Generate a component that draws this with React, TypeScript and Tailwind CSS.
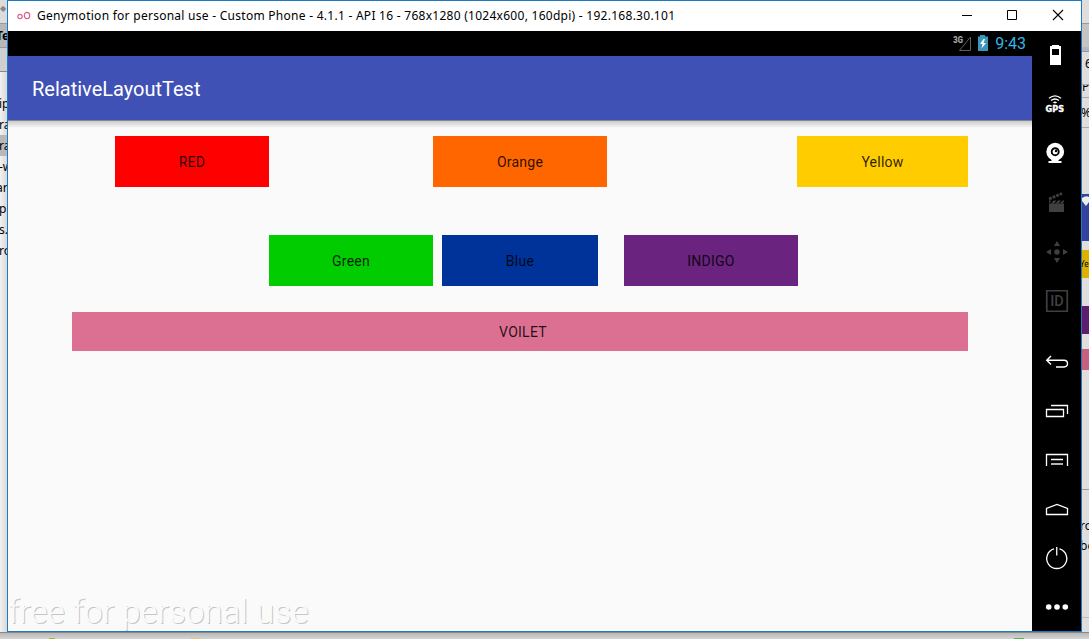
import type { ReactNode } from 'react';

function Slot({ children }: { children: ReactNode }) {
  return (
    <svg width="49" height="49" viewBox="0 0 49 49" fill="none" className="block shrink-0">
      {children}
    </svg>
  );
}

function Toolbar() {
  return (
    <aside className="flex w-[49px] shrink-0 flex-col bg-black">
      <Slot>
        <path d="M20 14h7v1h2v19H18V15h2z" fill="#fff" />
        <path d="M20 18h7v6h-7z" fill="#000" />
      </Slot>
      <Slot>
        <g stroke="#fff" strokeWidth="1.3">
          <path d="M17 18.300q6-5 12 0" />
          <path d="M19 20.600q4-3.200 8 0" />
        </g>
        <path d="M20.800 22.400q2.200-2 4.400 0L23 23.600z" fill="#fff" />
        <text x="13.600" y="31.600" textLength="18.600" lengthAdjust="spacingAndGlyphs" fill="#fff" stroke="#fff" strokeWidth="0.300" className="font-['DejaVu_Sans',sans-serif] text-[8px] font-bold">GPS</text>
      </Slot>
      <Slot>
        <circle cx="23.200" cy="22.700" r="8.900" fill="#fff" />
        <circle cx="23.200" cy="22.700" r="3.500" stroke="#000" strokeWidth="1.900" />
        <circle cx="24" cy="22" r="1.200" fill="#000" />
        <path d="M19.500 30h7v2h3v2h-13v-2h3z" fill="#fff" />
      </Slot>
      <Slot>
        <path d="M17 25.500h15V34H17z" fill="#404040" />
        <path d="M17 21l13-5.500" stroke="#404040" strokeWidth="2.800" strokeDasharray="2.900 1" />
        <path d="M17 22.500h2.500L17 25.500zM21.500 22.500h3l-2.500 3h-3zM26 22.500h3l-2.500 3h-3zM30.500 22.500H32v1l-1.500 2H28z" fill="#404040" />
      </Slot>
      <Slot>
        <g fill="#404040">
          <circle cx="25" cy="25" r="2.700" />
          <path d="M25 14l3 5h-6zM25 36l3-5h-6zM14 25l5-3v6zM36 25l-5-3v6z" />
        </g>
      </Slot>
      <Slot>
        <path d="M14.750 14.750h20.500v20.500h-20.500z" stroke="#404040" strokeWidth="1.700" />
        <text x="18.200" y="30.200" textLength="13.500" lengthAdjust="spacingAndGlyphs" fill="#404040" className="font-[Roboto,sans-serif] text-[14.5px] font-medium">ID</text>
      </Slot>
      <div className="h-3 shrink-0" />
      <Slot>
        <path d="M19 19l-4.300 4.300L19 27.600M14.700 23.300H32q3.500 0 3.500 3.300t-3.500 3.400h-8" stroke="#fff" strokeWidth="1.400" />
      </Slot>
      <Slot>
        <path d="M14.500 23.500h17v7h-17zM19 19.500h16.500V28" stroke="#fff" strokeWidth="1.300" />
      </Slot>
      <Slot>
        <path d="M14.500 31V19.500h21V31M19 24.500h12" stroke="#fff" strokeWidth="1.300" />
        <path d="M19 29h12" stroke="#b4b4b4" strokeWidth="2" />
      </Slot>
      <Slot>
        <path d="M14.500 30.500v-6L25 20.500l10.500 4v6z" stroke="#fff" strokeWidth="1.300" />
      </Slot>
      <Slot>
        <path d="M22 15.900a10 10 0 1 0 5.500 0M24.750 14v8.500" stroke="#fff" strokeWidth="1.300" />
      </Slot>
      <Slot>
        <g fill="#fff">
          <circle cx="16.700" cy="25" r="2.800" />
          <circle cx="25" cy="25" r="2.800" />
          <circle cx="33.300" cy="25" r="2.800" />
        </g>
      </Slot>
    </aside>
  );
}

function TitleBar() {
  return (
    <header className="flex h-[30px] shrink-0 items-center bg-white">
      <svg width="14" height="10" viewBox="0 0 14 10" fill="none" stroke="#df5c8d" strokeWidth="1.200" className="ml-[9px] shrink-0">
        <circle cx="3" cy="5.500" r="2.200" />
        <ellipse cx="10" cy="4.500" rx="2.700" ry="3.200" />
      </svg>
      <svg width="650" height="30" className="ml-[6px] shrink-0">
        <text x="0" y="19" textLength="638" fill="#000" className="font-['Noto_Sans',sans-serif] text-[12px]">
          Genymotion for personal use - Custom Phone - 4.1.1 - API 16 - 768x1280 (1024x600, 160dpi) - 192.168.30.101
        </text>
      </svg>
      <svg width="130" height="30" viewBox="0 0 130 30" fill="none" stroke="#000" className="ml-auto shrink-0">
        <path d="M11 14.500h10M56.500 9.500h9v9h-9z" />
        <path d="M102 9l10 10M112 9l-10 10" strokeWidth="1.100" />
      </svg>
    </header>
  );
}

function StatusBar() {
  return (
    <div className="flex h-[25px] shrink-0 items-center justify-end bg-black pr-[6px]">
      <svg width="38" height="25" viewBox="0 0 38 25" fill="none">
        <path d="M6.500 19.500H17.500V6z" stroke="#606060" />
        <text x="0.300" y="11.500" textLength="9.500" lengthAdjust="spacingAndGlyphs" fill="#aaa" stroke="#aaa" strokeWidth="0.200" className="font-[Roboto,sans-serif] text-[9px] font-bold">3G</text>
        <path d="M27 4h5v1.500h3V20H25V5.500h2z" fill="#3a96bb" />
        <path d="M30.500 8L27 13h2.500l-1 4.500L33 12h-2.500l1.500-4z" fill="#fff" />
      </svg>
      <span className="ml-[4px] font-[Roboto,sans-serif] text-[16px] leading-[25px] text-[#33b5e5]">9:43</span>
    </div>
  );
}

function Block({ label, className }: { label: string; className: string }) {
  return (
    <button className={`flex shrink-0 items-center justify-center pt-[2px] font-[Roboto,sans-serif] text-[14px] tracking-[0.25px] text-black/85 ${className}`}>
      <span>{label}</span>
    </button>
  );
}

function AppScreen() {
  return (
    <main className="flex min-w-0 flex-1 flex-col bg-[#fafafa]">
      <StatusBar />
      <div className="flex h-[64px] shrink-0 items-center bg-[#3f51b5] pl-6 pt-[2px] font-[Roboto,sans-serif] text-[20px] text-white">RelativeLayoutTest</div>
      <div className="h-px shrink-0 bg-[#87878a]" />
      <div className="h-[7px] shrink-0 bg-linear-to-b from-[#cacaca] to-[#fafafa]" />
      <div className="mt-2 flex">
        <Block label="RED" className="ml-[107px] h-[51px] w-[154px] bg-[#ff0000]" />
        <Block label="Orange" className="ml-[164px] h-[51px] w-[174px] bg-[#ff6600]" />
        <Block label="Yellow" className="ml-[190px] h-[51px] w-[171px] bg-[#ffcc00]" />
      </div>
      <div className="mt-12 flex">
        <Block label="Green" className="ml-[261px] h-[51px] w-[164px] bg-[#00cc00]" />
        <Block label="Blue" className="ml-[9px] h-[51px] w-[156px] bg-[#003399]" />
        <Block label="INDIGO" className="ml-[26px] h-[51px] w-[174px] bg-[#6a237f]" />
      </div>
      <Block label="VOILET" className="ml-[64px] mt-[26px] h-[39px] w-[896px] bg-[#db7093] pl-1.5" />
      <svg width="310" height="44" viewBox="0 0 310 44" className="mt-auto shrink-0">
        <g className="font-[Roboto,sans-serif] text-[33px] font-light">
          <text x="1.500" y="36.500" textLength="300" fill="#c6c6c6">free for personal use</text>
          <text x="0.500" y="35.500" textLength="300" fill="#fbfbfb">free for personal use</text>
        </g>
      </svg>
    </main>
  );
}

function LeftBackdrop() {
  const rows = ['ip', 'ra', 'ra', '-w', 'ar', 'p', 's.', 'ro'];
  return (
    <div className="flex w-[7px] shrink-0 flex-col overflow-hidden bg-linear-to-r from-[#f2f2f2] to-[#d8d8d8] font-['Noto_Sans',sans-serif] text-[12px] text-black">
      <div className="h-[23px] shrink-0 bg-[#dcdcdc] pt-1 text-[8px] leading-[8px] text-[#888]">◆</div>
      <div className="flex h-[25px] shrink-0 border-y border-[#9a9a9a] bg-[#b8b8b8] font-bold leading-[23px]">
        <span className="-ml-[4px]">Te</span>
      </div>
      <div className="h-[24px] shrink-0 border-b border-[#888] bg-[#cfcfcf]" />
      <div className="h-[21px] shrink-0" />
      {rows.map((row, i) => (
        <div key={i} className={`flex h-[21px] shrink-0 leading-[21px] ${i === 2 ? 'bg-[#b8b8b8]' : ''}`}>
          <span className={`whitespace-nowrap ${row === 'ar' ? '-ml-[4px]' : '-ml-px'}`}>{row}</span>
        </div>
      ))}
    </div>
  );
}

function RightBackdrop() {
  return (
    <div className="flex w-[7px] shrink-0 flex-col overflow-hidden bg-[#dedede] font-['Noto_Sans',sans-serif] text-[12px] text-black">
      <div className="h-[24px] shrink-0 border-b border-[#999]" />
      <div className="h-[23px] shrink-0 bg-[#c4c4c4]" />
      <div className="h-[5px] shrink-0 border-b border-[#999] bg-[#aeb6cc]" />
      <div className="h-[33px] shrink-0 border-b border-[#aaa] pl-[3px] leading-[24px]">6</div>
      <div className="h-[13px] shrink-0 overflow-hidden border-b border-[#aaa] leading-[4px]">P</div>
      <div className="h-[30px] shrink-0 border-b border-[#aaa] leading-[30px]">
        <span className="-ml-px">%</span>
      </div>
      <div className="h-[66px] shrink-0" />
      <svg width="7" height="47" className="shrink-0">
        <path d="M0 0h7v47H0z" fill="#3443a0" />
        <path d="M0 4q4-3 7-1v5l-3 4-4-5z" fill="#eee" />
      </svg>
      <div className="h-[9px] shrink-0" />
      <div className="h-[28px] shrink-0 bg-[#deb000] text-[8px] leading-[28px]">
        <span className="-ml-[2px]">Ye</span>
      </div>
      <div className="mt-[28px] h-[28px] shrink-0 bg-[#5d1e70]" />
      <div className="mt-[15px] h-[21px] shrink-0 bg-[#c56083]" />
      <div className="h-[120px] shrink-0 border-b border-[#999]" />
      <div className="flex h-[128px] shrink-0 flex-col border-b border-[#bbb] pt-[26px] leading-[20px]">
        <span className="-ml-[2px]">ro</span>
        <span className="-ml-[2px]">be</span>
      </div>
    </div>
  );
}

export default function App() {
  return (
    <div className="flex h-[639px] w-[1089px] flex-col overflow-hidden bg-[#cecece]">
      <div className="flex h-[632px] shrink-0">
        <LeftBackdrop />
        <section className="flex w-[1075px] shrink-0 flex-col border border-[#1b7bc5]">
          <TitleBar />
          <div className="flex min-h-0 flex-1">
            <AppScreen />
            <Toolbar />
          </div>
        </section>
        <RightBackdrop />
      </div>
      <div className="flex h-[7px] shrink-0 items-end border-t border-[#888] bg-linear-to-b from-[#b8b8b8] to-[#d4d4d4]">
        <div className="ml-[49px] h-px w-1.5 bg-[#a5b52d]" />
        <div className="ml-[135px] h-px w-[11px] bg-[#eac08b]" />
        <div className="ml-[813px] h-px w-2.5 bg-[#52b44d]" />
      </div>
    </div>
  );
}
